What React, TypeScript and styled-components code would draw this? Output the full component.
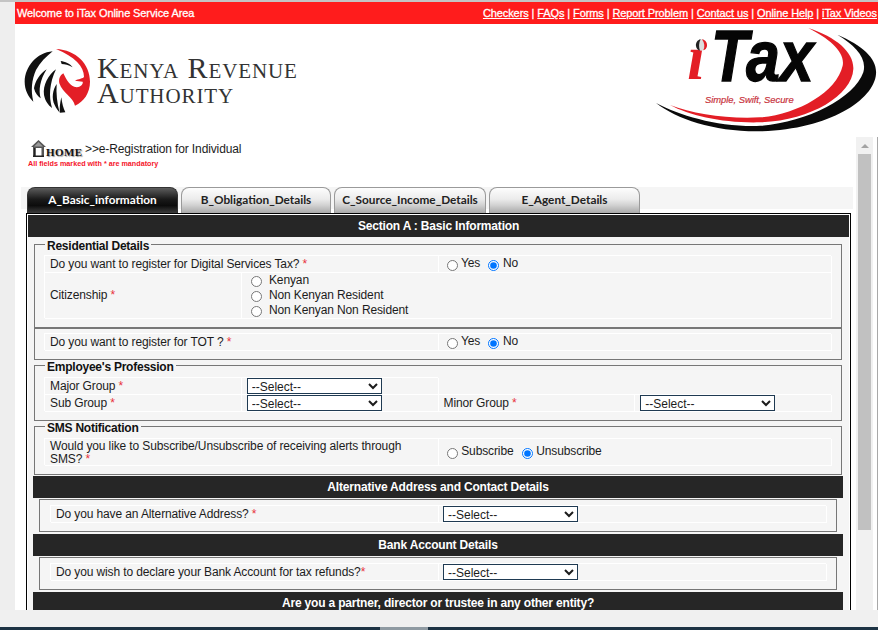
import React from "react";
import styled, { createGlobalStyle } from "styled-components";

const links = ["Checkers", "FAQs", "Forms", "Report Problem", "Contact us", "Online Help", "iTax Videos"];
const tabs = [
  { label: "A_Basic_information", width: 151 },
  { label: "B_Obligation_Details", width: 150 },
  { label: "C_Source_Income_Details", width: 152 },
  { label: "E_Agent_Details", width: 151 },
];

const KraLion = () => (
  <svg width="80" height="80" viewBox="0 0 240 240">
    <path fill="#e31e26" d="M108 27C168 30 210 72 210 125C210 158 192 185 165 197C160 172 128 160 118 130C115 115 122 105 130 100C140 120 150 140 170 142C185 140 190 130 188 125L165 122C175 116 190 116 192 110C192 80 165 50 108 27Z" />
    <path fill="#111" d="M122 63C135 65 150 70 158 82C145 75 135 72 125 72Z" />
    <path fill="#111" d="M98 34C50 38 15 80 14 125C14 150 25 170 40 185C32 150 35 120 48 90C60 68 78 50 98 34Z" />
    <path fill="#111" d="M80 88C60 100 45 125 42 145C45 160 55 170 62 175C55 150 60 120 80 88Z" />
    <path fill="#111" d="M108 88C85 105 68 135 72 165C76 185 85 195 96 204C86 170 88 130 108 88Z" />
    <path fill="#111" d="M110 132C98 150 94 175 104 195C108 205 114 212 119 218C111 190 108 160 110 132Z" />
    <path fill="#111" d="M124 172C120 190 118 205 120 218L136 217C130 205 126 190 124 172Z" />
  </svg>
);

const ITaxLogo = () => (
  <svg width="228" height="112" viewBox="0 0 684 336">
    <path fill="#e31e26" d="M475 12C560 40 612 85 610 135C606 215 480 290 330 295C220 298 120 275 60 243C130 270 230 285 330 280C440 272 560 205 578 125C586 85 540 45 475 12Z" />
    <path fill="#0a0a0a" d="M562 32C640 65 682 105 678 150C672 230 530 320 320 322C190 322 80 285 18 237C90 275 200 308 320 306C460 300 612 225 640 145C652 100 615 65 562 32Z" />
    <text x="183" y="170" fontFamily="Liberation Sans, sans-serif" fontWeight="700" fontStyle="italic" fontSize="219" textLength="308" lengthAdjust="spacingAndGlyphs" fill="#050505" stroke="#050505" strokeWidth="4">Tax</text>
    <text x="112" y="165" fontFamily="Liberation Serif, serif" fontWeight="700" fontStyle="italic" fontSize="190" fill="#e31e26">ı</text>
    <circle cx="154" cy="63" r="17" fill="#ddd" />
    <path fill="#222" d="M152 46C142 48 137 57 138 66C139 73 143 78 150 80C146 70 146 57 152 46Z" />
    <path fill="#e31e26" d="M156 46C167 48 172 57 171 66C170 73 165 78 160 79C165 69 164 57 156 46Z" />
    <text x="165" y="238" fontFamily="Liberation Sans, sans-serif" fontStyle="italic" fontSize="29" textLength="266" lengthAdjust="spacingAndGlyphs" fill="#c8323c" stroke="#c8323c" strokeWidth="0.6">Simple, Swift, Secure</text>
  </svg>
);

const HouseIcon = () => (
  <svg width="15" height="17" viewBox="0 0 15 17">
    <path fill="#555" d="M7.5 0L15 7H13V17H2V7H0Z" />
    <path fill="#fff" d="M4.5 8H10.5V16H4.5Z" />
    <path fill="#222" d="M3 8H4.5V17H3ZM2 15.5H13V17H2Z" />
    <path fill="#999" d="M7.5 2L12 6.5H3Z" />
  </svg>
);

const Req = () => <Star> *</Star>;

const RadioPair = ({ name, yes, no }: { name: string; yes: string; no: string }) => (
  <span>
    <Option>
      <Radio type="radio" name={name} /> {yes}
    </Option>
    <Option $gap>
      <Radio type="radio" name={name} defaultChecked /> {no}
    </Option>
  </span>
);

const Dropdown = () => (
  <Select defaultValue="">
    <option value="">--Select--</option>
  </Select>
);

export default function App() {
  return (
    <Page>
      <GlobalStyle />
      <TopEdge />
      <Shell>
        <Gutter />
        <Main>
          <RedBar>
            <span>Welcome to iTax Online Service Area</span>
            <Links>
              {links.map((link, i) => (
                <React.Fragment key={link}>
                  {i > 0 && " | "}
                  <a href="#">{link}</a>
                </React.Fragment>
              ))}
            </Links>
          </RedBar>
          <Brand>
            <Kra>
              <KraLion />
              <KraName>
                <span>Kenya Revenue</span>
                <span>Authority</span>
              </KraName>
            </Kra>
            <ITaxLogo />
          </Brand>
          <Work>
            <Content>
              <Crumbs>
                <CrumbLine>
                  <HouseIcon />
                  <Home>HOME</Home>
                  <CrumbText>&gt;&gt;e-Registration for Individual</CrumbText>
                </CrumbLine>
                <Note>All fields marked with * are mandatory</Note>
              </Crumbs>
              <TabStrip>
                {tabs.map((tab, i) => (
                  <Tab key={tab.label} $active={i === 0} $width={tab.width}>
                    {tab.label}
                  </Tab>
                ))}
              </TabStrip>
              <Box>
                <Panel>
                  <SectionBar>Section A : Basic Information</SectionBar>
                  <Body>
                    <Group $top={2} $pt={6}>
                      <Legend>Residential Details</Legend>
                      <Grid>
                        <Cell $span={2} $h={17}>
                          <span>
                            Do you want to register for Digital Services Tax?
                            <Req />
                          </span>
                        </Cell>
                        <Cell $span={2} $h={17} $pt={0}>
                          <RadioPair name="dst" yes="Yes" no="No" />
                        </Cell>
                        <Cell $span={1} $h={46} $pt={0}>
                          <span>
                            Citizenship
                            <Req />
                          </span>
                        </Cell>
                        <Cell $span={3} $h={46} $pt={0}>
                          <div>
                            <Stacked>
                              <Radio $stacked type="radio" name="citizen" /> Kenyan
                            </Stacked>
                            <Stacked>
                              <Radio $stacked type="radio" name="citizen" /> Non Kenyan Resident
                            </Stacked>
                            <Stacked>
                              <Radio $stacked type="radio" name="citizen" /> Non Kenyan Non Resident
                            </Stacked>
                          </div>
                        </Cell>
                      </Grid>
                    </Group>
                    <Group $pt={4}>
                      <Grid>
                        <Cell $span={2} $h={17}>
                          <span>
                            Do you want to register for TOT ?
                            <Req />
                          </span>
                        </Cell>
                        <Cell $span={2} $h={17} $pt={0}>
                          <RadioPair name="tot" yes="Yes" no="No" />
                        </Cell>
                      </Grid>
                    </Group>
                    <Group $pt={7}>
                      <Legend>Employee's Profession</Legend>
                      <Grid>
                        <Cell $span={1} $h={17}>
                          <span>
                            Major Group
                            <Req />
                          </span>
                        </Cell>
                        <Cell $span={1} $h={17} $pt={1}>
                          <Dropdown />
                        </Cell>
                        <Blank />
                        <Cell $span={1} $h={17}>
                          <span>
                            Sub Group
                            <Req />
                          </span>
                        </Cell>
                        <Cell $span={1} $h={17} $pt={1}>
                          <Dropdown />
                        </Cell>
                        <Cell $span={1} $h={17}>
                          <span>
                            Minor Group
                            <Req />
                          </span>
                        </Cell>
                        <Cell $span={1} $h={17} $pt={1}>
                          <Dropdown />
                        </Cell>
                      </Grid>
                    </Group>
                    <Group $pt={7}>
                      <Legend>SMS Notification</Legend>
                      <Grid>
                        <Cell $span={2} $h={27}>
                          <span>
                            Would you like to Subscribe/Unsubscribe of receiving alerts through
                            <br />
                            SMS?
                            <Req />
                          </span>
                        </Cell>
                        <Cell $span={2} $h={27} $pt={0}>
                          <RadioPair name="sms" yes="Subscribe" no="Unsubscribe" />
                        </Cell>
                      </Grid>
                    </Group>
                    <Bar $top={1}>Alternative Address and Contact Details</Bar>
                    <Group $inset $top={1} $pt={5}>
                      <Grid>
                        <Cell $span={2} $h={17}>
                          <span>
                            Do you have an Alternative Address?
                            <Req />
                          </span>
                        </Cell>
                        <Cell $span={2} $h={17} $pt={1}>
                          <Dropdown />
                        </Cell>
                      </Grid>
                    </Group>
                    <Bar $top={2}>Bank Account Details</Bar>
                    <Group $inset $top={1} $pt={5}>
                      <Grid>
                        <Cell $span={2} $h={17}>
                          <span>
                            Do you wish to declare your Bank Account for tax refunds?
                            <Star>*</Star>
                          </span>
                        </Cell>
                        <Cell $span={2} $h={17} $pt={1}>
                          <Dropdown />
                        </Cell>
                      </Grid>
                    </Group>
                    <Bar $top={2}>Are you a partner, director or trustee in any other entity?</Bar>
                  </Body>
                </Panel>
              </Box>
            </Content>
            <Rail>
              <Track>
                <ArrowUp />
                <Thumb />
              </Track>
            </Rail>
          </Work>
        </Main>
      </Shell>
      <FootStrip />
      <Taskbar>
        <TaskItem />
      </Taskbar>
    </Page>
  );
}

const GlobalStyle = createGlobalStyle`
  html, body {
    margin: 0;
    padding: 0;
    background: #fff;
    overflow: hidden;
  }
`;

const Page = styled.div`
  width: 878px;
  height: 630px;
  display: flex;
  flex-direction: column;
  overflow: hidden;
  color: #1c1c1c;
  font-family: "Liberation Sans", Arial, sans-serif;
  font-size: 12px;
  letter-spacing: -0.12px;
`;

const TopEdge = styled.div`
  height: 2px;
  flex: none;
  background: #c4c4c4;
`;

const Shell = styled.div`
  flex: 1;
  min-height: 0;
  display: flex;
`;

const Gutter = styled.div`
  width: 15px;
  flex: none;
  background: #eeeeee;
`;

const Main = styled.div`
  flex: 1;
  min-width: 0;
  display: flex;
  flex-direction: column;
`;

const RedBar = styled.div`
  height: 22px;
  flex: none;
  padding: 0 1px 0 2px;
  display: flex;
  align-items: center;
  justify-content: space-between;
  background: #ff1c1c;
  color: #fff;
  font-size: 11px;
  letter-spacing: -0.1px;
  -webkit-text-stroke: 0.3px #fff;
  white-space: nowrap;
`;

const Links = styled.span`
  a {
    color: #fff;
    text-decoration: underline;
  }
`;

const Brand = styled.div`
  height: 113px;
  flex: none;
  display: flex;
  justify-content: space-between;
  align-items: flex-start;
  padding-left: 5px;
`;

const Kra = styled.div`
  display: flex;
  align-items: center;
  margin-top: 16px;
`;

const KraName = styled.div`
  display: flex;
  flex-direction: column;
  margin-left: -3px;
  font-family: "Liberation Serif", serif;
  font-variant: small-caps;
  font-size: 30px;
  line-height: 25px;
  letter-spacing: 0.9px;
  color: #333;
  white-space: nowrap;
`;

const Work = styled.div`
  flex: 1;
  min-height: 0;
  display: flex;
`;

const Content = styled.div`
  flex: 1;
  min-width: 0;
  overflow: hidden;
  padding-left: 6px;
`;

const Crumbs = styled.div`
  height: 50px;
  padding: 3px 0 0 9px;
  box-sizing: border-box;
`;

const CrumbLine = styled.div`
  display: flex;
  align-items: flex-start;
  margin-left: 1px;
`;

const Home = styled.span`
  margin-top: 7px;
  width: 39px;
  font-family: "Liberation Serif", serif;
  font-size: 11px;
  line-height: 11px;
  font-weight: 700;
  letter-spacing: 0.4px;
  color: #111;
  text-shadow: 1px 1px 1px #999;
`;

const CrumbText = styled.span`
  line-height: 18px;
  color: #1c1c1c;
`;

const Note = styled.div`
  margin: 1px 0 0 -2px;
  font-size: 7.2px;
  line-height: 9px;
  font-weight: 700;
  letter-spacing: 0;
  color: #f5142a;
`;

const TabStrip = styled.div`
  height: 26px;
  width: 832px;
  box-sizing: border-box;
  padding-left: 6px;
  display: flex;
  gap: 3px;
  background: linear-gradient(#f5f5f5 22px, transparent 22px);
`;

const Tab = styled.div<{ $active?: boolean; $width: number }>`
  width: ${({ $width }) => $width}px;
  box-sizing: border-box;
  display: flex;
  align-items: center;
  justify-content: center;
  padding-bottom: 3px;
  border: 1px solid ${({ $active }) => ($active ? "#333" : "#9a9a9a")};
  border-bottom: none;
  border-radius: 8px 8px 0 0;
  font-family: Lato, sans-serif;
  font-size: 11.8px;
  font-weight: 700;
  letter-spacing: 0;
  color: ${({ $active }) => ($active ? "#fff" : "#222")};
  background: ${({ $active }) =>
    $active
      ? "linear-gradient(#5c5c5c, #1a1a1a 45%, #0c0c0c 70%, #3c3c3c)"
      : "linear-gradient(#fdfdfd, #ebebeb 45%, #d0d0d0 70%, #a8a8a8)"};
`;

const Box = styled.div`
  width: 825px;
  margin-left: 5px;
  box-sizing: border-box;
  border: 1px solid #000;
  padding: 1px;
  background: #fff;
`;

const Panel = styled.div`
  background: #f5f5f5;
`;

const SectionBar = styled.div`
  height: 22px;
  display: flex;
  align-items: center;
  justify-content: center;
  background: #262626;
  color: #fff;
  font-weight: 700;
  letter-spacing: -0.18px;
`;

const Bar = styled(SectionBar)<{ $top: number }>`
  margin-top: ${({ $top }) => $top}px;
`;

const Body = styled.div`
  padding: 0 6px 0 5px;
`;

const Select = styled.select`
  width: 135px;
  height: 16px;
  box-sizing: border-box;
  padding: 0;
  border: 1px solid #1f3a52;
  border-radius: 0;
  background: #fff;
  color: #1c1c1c;
  font-family: "Liberation Sans", Arial, sans-serif;
  font-size: 12px;
`;

const Group = styled.fieldset<{ $inset?: boolean; $top?: number; $pt: number }>`
  min-width: 0;
  margin: ${({ $top = 0 }) => $top}px ${({ $inset }) => ($inset ? "6px" : "1px")} 0;
  padding: ${({ $pt }) => $pt}px 10px 9px ${({ $inset }) => ($inset ? "10px" : "9px")};
  border: 1px solid #777;

  ${Select} {
    margin-left: ${({ $inset }) => ($inset ? "-1px" : "0")};
  }
`;

const Legend = styled.legend`
  margin-left: 1px;
  padding: 0 2px;
  height: 10px;
  line-height: 14px;
  font-size: 12px;
  font-weight: 700;
  letter-spacing: -0.24px;
  color: #111;
`;

const Grid = styled.div`
  display: grid;
  grid-template-columns: repeat(4, 1fr);
  line-height: 13px;
`;

const Cell = styled.div<{ $span: number; $h: number; $pt?: number }>`
  grid-column: span ${({ $span }) => $span};
  height: ${({ $h }) => $h}px;
  box-sizing: border-box;
  padding: ${({ $pt = 2 }) => $pt}px 0 0 6px;
  display: flex;
  align-items: center;
  box-shadow: inset 1px 1px #fff, 1px 1px #fff;
  white-space: nowrap;
`;

const Blank = styled.div`
  grid-column: span 2;
`;

const Star = styled.span`
  color: #e8323c;
`;

const Option = styled.label<{ $gap?: boolean }>`
  margin-left: ${({ $gap }) => ($gap ? "5px" : "0")};
`;

const Stacked = styled.label`
  display: block;
  height: 15px;
  line-height: 15px;
`;

const Radio = styled.input<{ $stacked?: boolean }>`
  width: 11px;
  height: 11px;
  margin: 0 ${({ $stacked }) => ($stacked ? "4px" : "0.5px")} 0 ${({ $stacked }) => ($stacked ? "4px" : "3px")};
  vertical-align: ${({ $stacked }) => ($stacked ? "-3px" : "-4px")};
`;

const Rail = styled.div`
  width: 22px;
  flex: none;
  box-sizing: border-box;
  border-right: 1px solid #a8a8a8;
`;

const Track = styled.div`
  width: 17px;
  height: 100%;
  background: #f1f1f1;
`;

const ArrowUp = styled.div`
  height: 17px;
  box-sizing: border-box;
  display: flex;
  align-items: center;
  justify-content: center;

  &::before {
    content: "";
    border-left: 4px solid transparent;
    border-right: 4px solid transparent;
    border-bottom: 4px solid #a3a3a3;
  }
`;

const Thumb = styled.div`
  width: 13px;
  height: 376px;
  margin-left: 2px;
  background: #c1c1c1;
`;

const FootStrip = styled.div`
  height: 17px;
  flex: none;
  background: #f0f0f0;
`;

const Taskbar = styled.div`
  height: 3px;
  flex: none;
  padding-left: 380px;
  background: #1d3344;
`;

const TaskItem = styled.div`
  width: 48px;
  height: 100%;
  background: #8f9aa2;
`;
